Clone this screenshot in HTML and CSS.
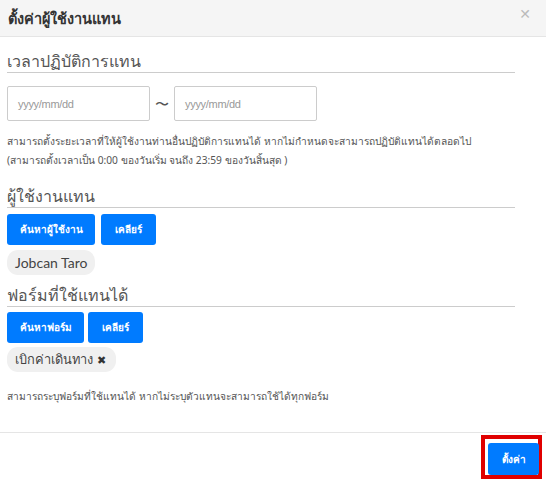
FILE: index.html
```html
<!DOCTYPE html>
<html lang="th">
<head>
<meta charset="utf-8">
<link rel="stylesheet" href="styles.css">
</head>
<body>
<div class="modal">
  <div class="modal-header">
    <div class="modal-title">ตั้งค่าผู้ใช้งานแทน</div>
    <div class="close">✕</div>
  </div>
  <div class="modal-body">
    <div class="legend legend-1">เวลาปฏิบัติการแทน</div>
    <div class="date-row">
      <div class="input">yyyy/mm/dd</div>
      <span class="tilde">〜</span>
      <div class="input">yyyy/mm/dd</div>
    </div>
    <div class="help help-date">สามารถตั้งระยะเวลาที่ให้ผู้ใช้งานท่านอื่นปฏิบัติการแทนได้ หากไม่กำหนดจะสามารถปฏิบัติแทนได้ตลอดไป<br>(สามารถตั้งเวลาเป็น 0:00 ของวันเริ่ม จนถึง 23:59 ของวันสิ้นสุด )</div>

    <div class="legend legend-2">ผู้ใช้งานแทน</div>
    <div class="btn-row">
      <button class="btn btn-user">ค้นหาผู้ใช้งาน</button>
      <button class="btn btn-clear1">เคลียร์</button>
    </div>
    <div class="chip chip-user">Jobcan Taro</div>

    <div class="legend legend-3">ฟอร์มที่ใช้แทนได้</div>
    <div class="btn-row btn-row-2">
      <button class="btn btn-form">ค้นหาฟอร์ม</button>
      <button class="btn btn-clear2">เคลียร์</button>
    </div>
    <div class="chip chip-form">เบิกค่าเดินทาง <span class="x">✖</span></div>
    <div class="help help-form">สามารถระบุฟอร์มที่ใช้แทนได้ หากไม่ระบุตัวแทนจะสามารถใช้ได้ทุกฟอร์ม</div>
  </div>
  <div class="modal-footer">
    <div class="highlight"><button class="btn btn-save">ตั้งค่า</button></div>
  </div>
</div>
</body>
</html>
```
FILE: styles.css
```css
html, body {
  margin: 0;
  padding: 0;
  background: #fff;
}
body {
  font-family: Tahoma, "Noto Sans", "DejaVu Sans", sans-serif;
  color: #555;
}
.modal {
  width: 546px;
  height: 483px;
  display: flex;
  flex-direction: column;
}
.modal-header {
  height: 37px;
  box-sizing: border-box;
  background: #f5f5f5;
  border-bottom: 1px solid #e5e5e5;
  display: flex;
  align-items: center;
  justify-content: space-between;
  padding: 0 15px 0 8px;
}
.modal-title {
  font-size: 14.5px;
  font-weight: bold;
  color: #333;
}
.close {
  font-size: 14px;
  font-weight: bold;
  color: #bbb;
  margin-top: -9px;
}
.modal-body {
  padding: 0 31px 0 7px;
  height: 396px;
  box-sizing: border-box;
  border-bottom: 1px solid #e5e5e5;
}
.legend {
  font-size: 16px;
  line-height: 20px;
  color: #555;
  border-bottom: 1px solid #ccc;
  padding-bottom: 1px;
}
.legend-1 {
  margin-top: 14px;
}
.date-row {
  display: flex;
  align-items: center;
  margin-top: 13px;
}
.input {
  width: 143px;
  height: 35px;
  box-sizing: border-box;
  border: 1px solid #ccc;
  border-radius: 2px;
  font-family: "Liberation Sans", Arial, sans-serif;
  font-size: 11px;
  color: #999;
  display: flex;
  align-items: center;
  padding-left: 10px;
  letter-spacing: -0.3px;
}
.tilde {
  width: 24px;
  text-align: center;
  font-size: 14px;
  color: #555;
}
.help {
  font-size: 10.2px;
  color: #555;
  line-height: 19px;
}
.help-date {
  margin-top: 11px;
}
.legend-2 {
  margin-top: 16px;
}
.btn-row {
  display: flex;
  gap: 6px;
  margin-top: 6px;
}
.btn {
  background: #007bff;
  color: #fff;
  border: none;
  border-radius: 3px;
  font-family: Tahoma, "Noto Sans", "DejaVu Sans", sans-serif;
  font-size: 10px;
  font-weight: bold;
  height: 31px;
  padding: 0;
}
.btn-user { width: 88px; }
.btn-clear1 { width: 55px; }
.chip {
  display: flex;
  width: fit-content;
  align-items: center;
  background: #f0f0f0;
  border-radius: 11px;
  height: 25px;
  box-sizing: border-box;
  padding: 0 8px;
  font-size: 14px;
  color: #444;
  margin-top: 5px;
  white-space: nowrap;
}
.chip-user {
  font-family: Lato, "Open Sans", sans-serif;
}
.legend-3 {
  margin-top: 10px;
}
.btn-row-2 {
  gap: 4px;
  margin-top: 5px;
}
.btn-form { width: 77px; }
.btn-clear2 { width: 55px; }
.chip-form {
  margin-top: 4px;
  font-size: 12.8px;
  padding: 0 10px 0 8px;
}
.chip .x {
  font-size: 11px;
  color: #333;
  margin-left: 4px;
}
.help-form {
  margin-top: 15px;
}
.modal-footer {
  flex: 1;
  display: flex;
  justify-content: flex-end;
  align-items: flex-start;
  padding: 2px 4px 0 0;
}
.highlight {
  border: 4px solid #e00000;
  padding: 4px 0 0 3px;
  width: 61px;
  height: 44px;
  box-sizing: border-box;
}
.btn-save {
  width: 51px;
  height: 32px;
  font-size: 10px;
}
```
